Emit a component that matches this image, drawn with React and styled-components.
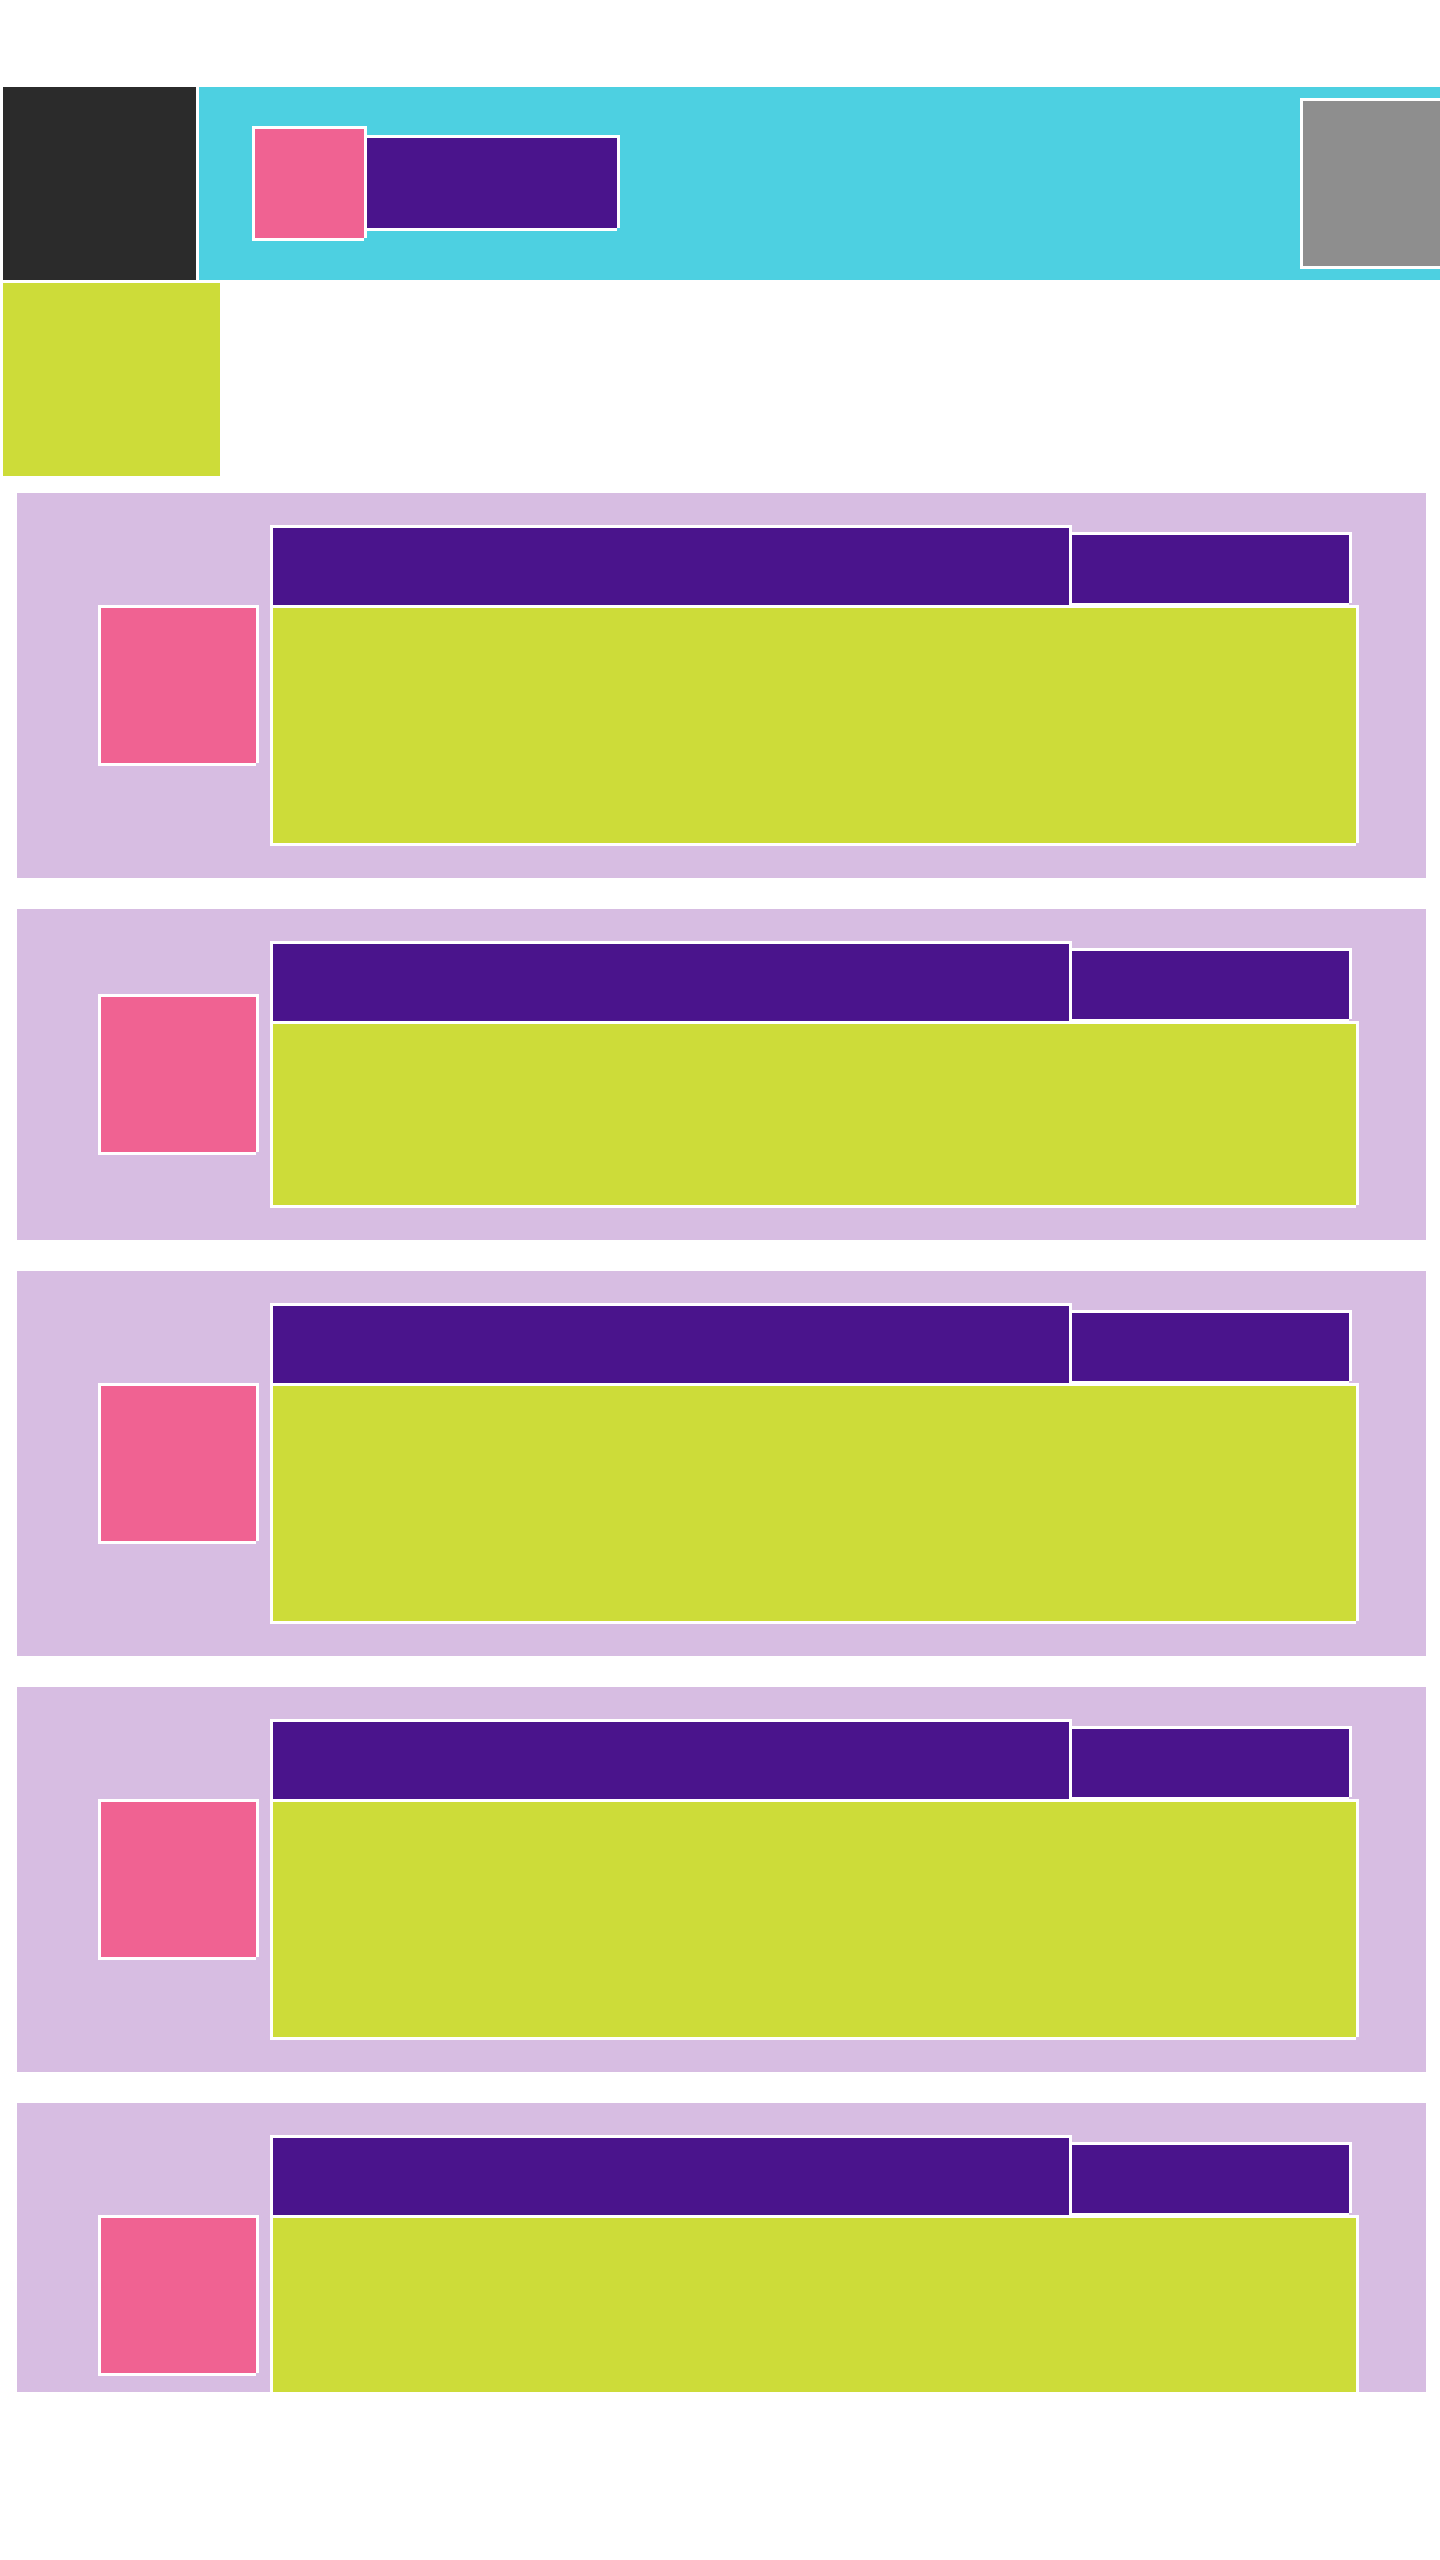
import React from "react";
import styled, { createGlobalStyle, css } from "styled-components";

const colors = {
  page: "#ffffff",
  dark: "#2b2b2b",
  bar: "#4dd0e1",
  image: "#f06292",
  text: "#4a148c",
  block: "#cddc39",
  card: "#d7bde2",
  action: "#8e8e8e",
};

const GlobalStyle = createGlobalStyle`
  * { box-sizing: border-box; }
  body {
    margin: 0;
    background: ${colors.page};
    font-family: Roboto, "Liberation Sans", sans-serif;
  }
`;

/* White edge on every side, left open at the bottom right corner. */
const outlined = css`
  box-shadow: -3px -3px #fff, 3px -3px #fff, -3px 3px #fff, 3px 0 #fff, 0 3px #fff;
`;

const Screen = styled.div`
  display: flex;
  flex-direction: column;
  height: 100vh;
  padding: 87px 0 168px;
  overflow: hidden;
`;

const Header = styled.header`
  display: flex;
  flex: none;
  gap: 3px;
  height: 193px;
  padding-left: 3px;
`;

const NavTile = styled.div`
  flex: none;
  width: 193px;
  background: ${colors.dark};
`;

const Bar = styled.div`
  display: flex;
  flex: 1;
  align-items: center;
  justify-content: space-between;
  padding-left: 56px;
  background: ${colors.bar};
`;

const Identity = styled.div`
  display: flex;
  align-items: flex-start;
  gap: 3px;
`;

const Picture = styled.div`
  flex: none;
  width: ${({ $size }) => $size}px;
  height: ${({ $size }) => $size}px;
  background: ${colors.image};
  ${outlined}
`;

const BarTitle = styled.div`
  width: 250px;
  height: 90px;
  margin-top: 9px;
  background: ${colors.text};
  ${outlined}
`;

const BarAction = styled.div`
  width: 137px;
  height: 165px;
  background: ${colors.action};
  ${outlined}
`;

const Tab = styled.div`
  flex: none;
  width: 217px;
  height: 193px;
  margin: 3px 3px 0;
  background: ${colors.block};
`;

const List = styled.ul`
  display: flex;
  flex: 1;
  flex-direction: column;
  gap: 31px;
  min-height: 0;
  margin: 0;
  padding: 17px 14px 0 17px;
  overflow: hidden;
  list-style: none;
`;

const Card = styled.li`
  display: flex;
  flex: none;
  align-items: center;
  gap: 17px;
  padding: 35px 70px 35px 84px;
  background: ${colors.card};
`;

const CardBody = styled.div`
  display: flex;
  flex: 1;
  flex-direction: column;
  gap: 3px;
  min-width: 0;
`;

const CardHeading = styled.div`
  display: grid;
  grid-template-columns: minmax(0, 1fr) 277px;
  gap: 3px;
  align-items: start;
  padding-right: 7px;
`;

const CardTitle = styled.div`
  height: 77px;
  background: ${colors.text};
  ${outlined}
`;

const CardTime = styled.div`
  height: 68px;
  margin-top: 7px;
  background: ${colors.text};
  ${outlined}
`;

const CardContent = styled.div`
  height: ${({ $short }) => ($short ? 181 : 235)}px;
  background: ${colors.block};
  ${outlined}
`;

const cards = [
  { id: 1, short: false },
  { id: 2, short: true },
  { id: 3, short: false },
  { id: 4, short: false },
  { id: 5, short: false },
];

export default function App() {
  return (
    <>
      <GlobalStyle />
      <Screen>
        <Header>
          <NavTile />
          <Bar>
            <Identity>
              <Picture $size={109} />
              <BarTitle />
            </Identity>
            <BarAction />
          </Bar>
        </Header>
        <Tab />
        <List>
          {cards.map((card) => (
            <Card key={card.id}>
              <Picture $size={155} />
              <CardBody>
                <CardHeading>
                  <CardTitle />
                  <CardTime />
                </CardHeading>
                <CardContent $short={card.short} />
              </CardBody>
            </Card>
          ))}
        </List>
      </Screen>
    </>
  );
}
